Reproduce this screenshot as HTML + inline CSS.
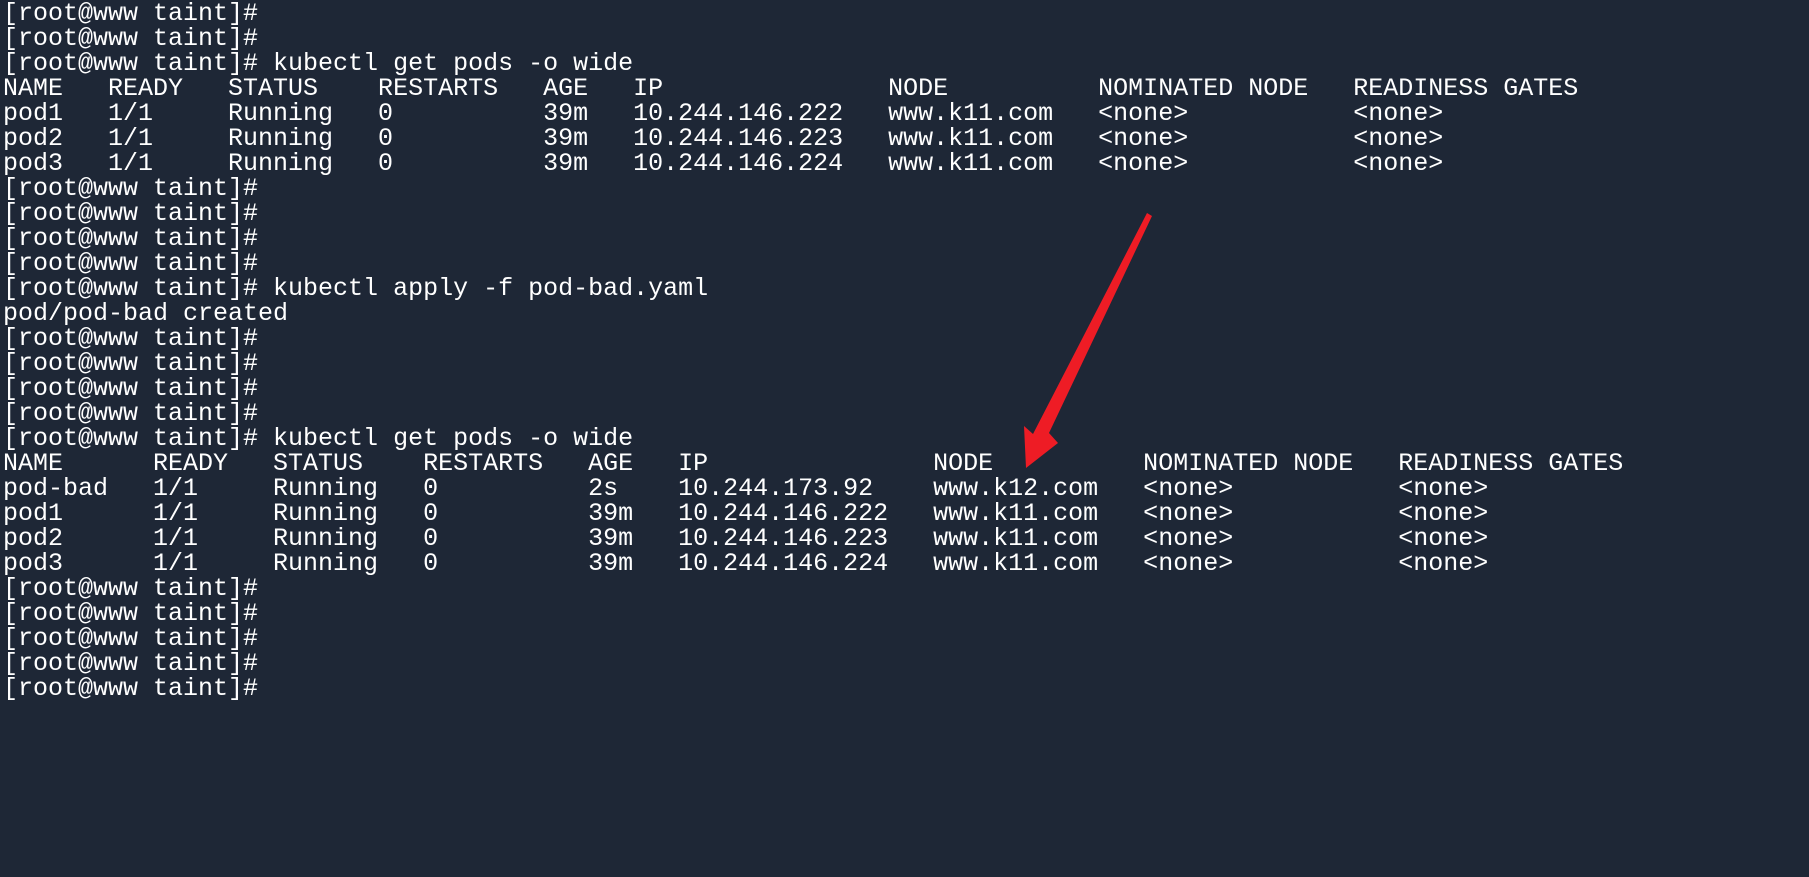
<!DOCTYPE html>
<html><head><meta charset="utf-8"><style>
html,body{margin:0;padding:0;background:#1e2736;width:1809px;height:877px;overflow:hidden}
pre{margin:0;padding:1px 0 0 3px;color:#fff;font-family:"Liberation Mono",monospace;font-size:25px;line-height:25px}
svg{position:absolute;left:0;top:0}
</style></head><body>
<pre>[root@www taint]#
[root@www taint]#
[root@www taint]# kubectl get pods -o wide
NAME   READY   STATUS    RESTARTS   AGE   IP               NODE          NOMINATED NODE   READINESS GATES
pod1   1/1     Running   0          39m   10.244.146.222   www.k11.com   &lt;none&gt;           &lt;none&gt;
pod2   1/1     Running   0          39m   10.244.146.223   www.k11.com   &lt;none&gt;           &lt;none&gt;
pod3   1/1     Running   0          39m   10.244.146.224   www.k11.com   &lt;none&gt;           &lt;none&gt;
[root@www taint]#
[root@www taint]#
[root@www taint]#
[root@www taint]#
[root@www taint]# kubectl apply -f pod-bad.yaml
pod/pod-bad created
[root@www taint]#
[root@www taint]#
[root@www taint]#
[root@www taint]#
[root@www taint]# kubectl get pods -o wide
NAME      READY   STATUS    RESTARTS   AGE   IP               NODE          NOMINATED NODE   READINESS GATES
pod-bad   1/1     Running   0          2s    10.244.173.92    www.k12.com   &lt;none&gt;           &lt;none&gt;
pod1      1/1     Running   0          39m   10.244.146.222   www.k11.com   &lt;none&gt;           &lt;none&gt;
pod2      1/1     Running   0          39m   10.244.146.223   www.k11.com   &lt;none&gt;           &lt;none&gt;
pod3      1/1     Running   0          39m   10.244.146.224   www.k11.com   &lt;none&gt;           &lt;none&gt;
[root@www taint]#
[root@www taint]#
[root@www taint]#
[root@www taint]#
[root@www taint]#</pre>
<svg width="1809" height="877"><path d="M1147,213 L1152,216 L1049,433 L1058,443 L1026,468 L1024,426 L1033,434 Z" fill="#ee1c25"/></svg>
</body></html>
